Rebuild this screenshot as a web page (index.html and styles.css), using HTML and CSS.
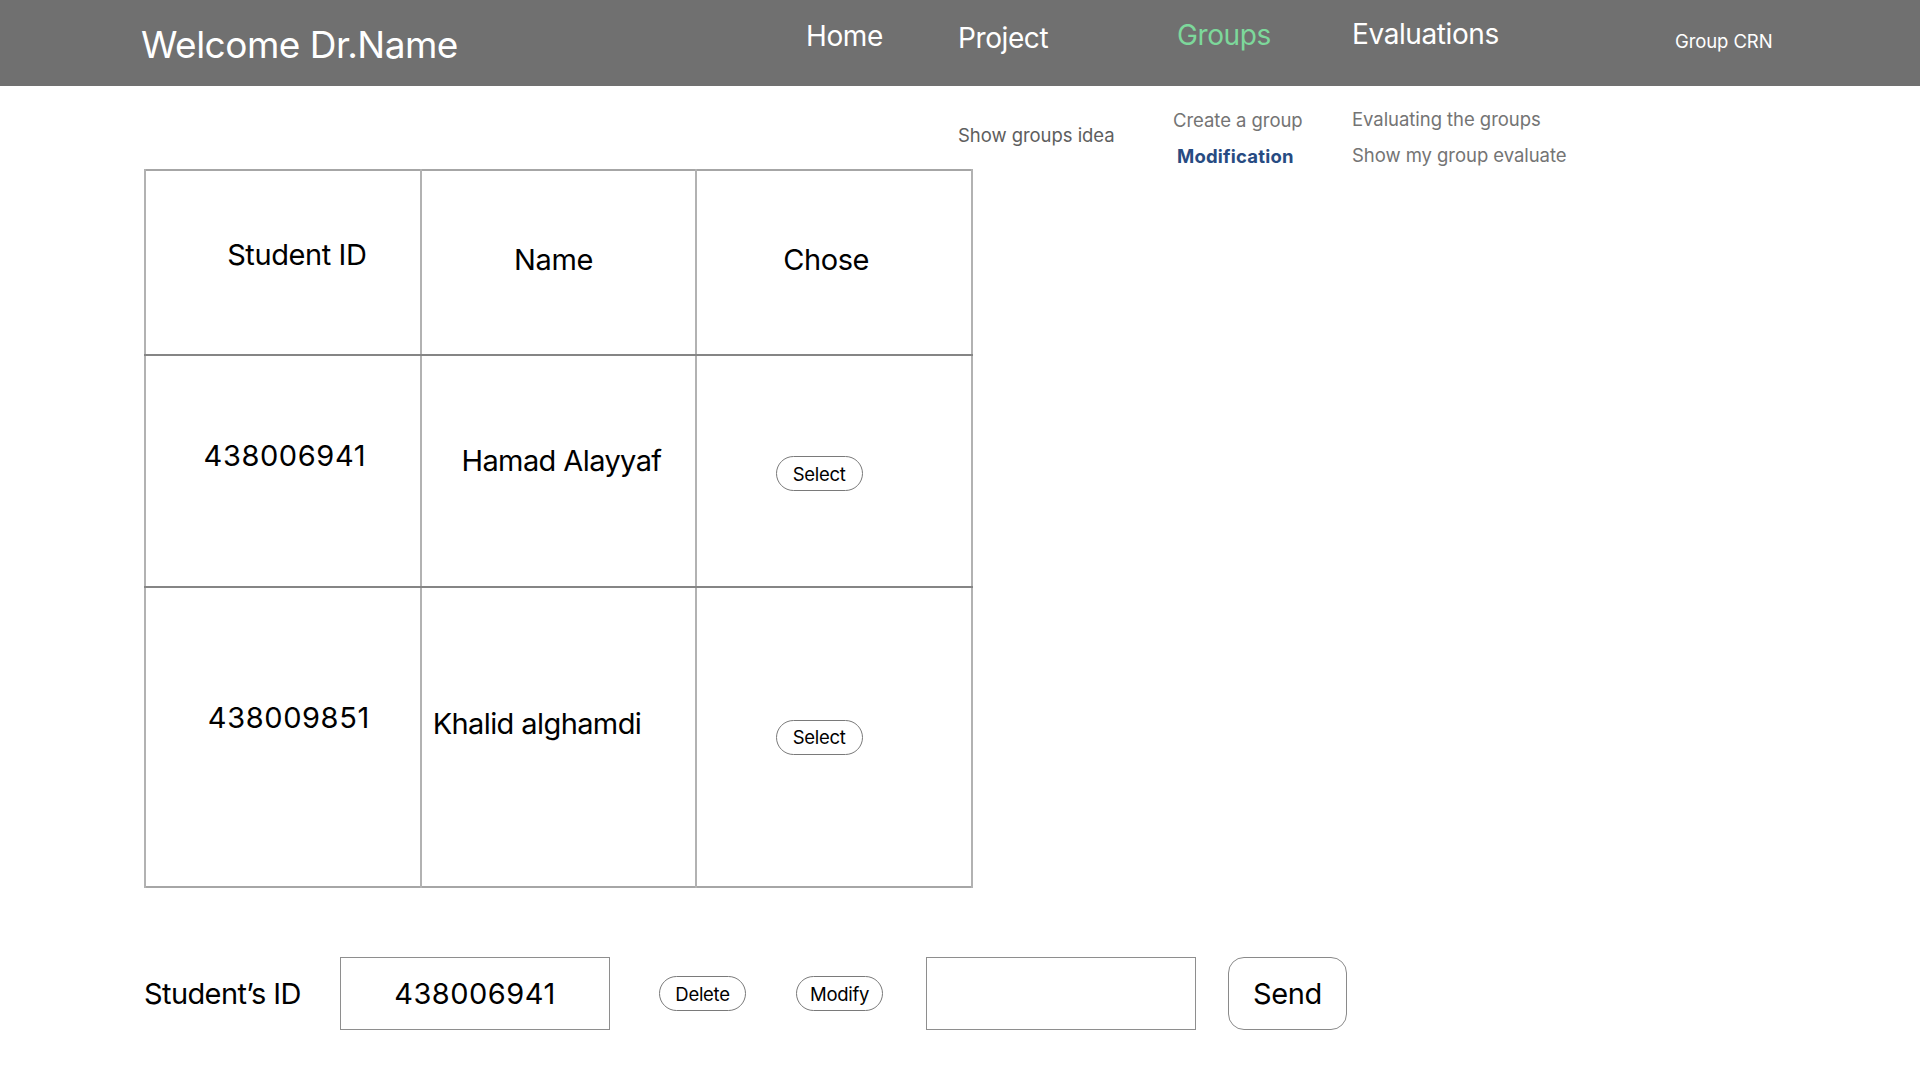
FILE: index.html
```html
<!DOCTYPE html>
<html lang="en">
<head>
<meta charset="utf-8">
<title>Welcome Dr.Name</title>
<link rel="stylesheet" href="styles.css">
</head>
<body>
<header class="topbar cols">
  <div class="brand">Welcome Dr.Name</div>
  <a class="nav nav-home">Home</a>
  <a class="nav nav-project">Project</a>
  <a class="nav nav-groups">Groups</a>
  <a class="nav nav-evals">Evaluations</a>
  <a class="nav-crn">Group CRN</a>
</header>

<nav class="subnav cols">
  <div class="sub-col sub-project">
    <a class="sub-link sub-dark">Show groups idea</a>
  </div>
  <div class="sub-col sub-groups">
    <a class="sub-link sub-create">Create a group</a>
    <a class="sub-link sub-active">Modification</a>
  </div>
  <div class="sub-col sub-evals">
    <a class="sub-link">Evaluating the groups</a>
    <a class="sub-link">Show my group evaluate</a>
  </div>
</nav>

<main class="content">
  <table class="students">
    <colgroup><col class="c"><col class="c"><col class="c"></colgroup>
    <tr class="row-head">
      <th class="h-id">Student ID</th>
      <th class="h-name">Name</th>
      <th class="h-chose">Chose</th>
    </tr>
    <tr class="row-1">
      <td class="num id-1">438006941</td>
      <td class="name-1">Hamad Alayyaf</td>
      <td class="sel sel-1"><button class="pill">Select</button></td>
    </tr>
    <tr class="row-2">
      <td class="num id-2">438009851</td>
      <td class="name-2">Khalid alghamdi</td>
      <td class="sel sel-2"><button class="pill">Select</button></td>
    </tr>
  </table>

  <div class="actions">
    <label class="act-label">Student’s ID</label>
    <div class="box box-id">438006941</div>
    <button class="pill pill-delete">Delete</button>
    <button class="pill pill-modify">Modify</button>
    <div class="box box-empty"></div>
    <button class="send">Send</button>
  </div>
</main>
</body>
</html>
```
FILE: styles.css
```css
* { box-sizing: border-box; }

html, body {
  margin: 0;
  padding: 0;
  background: #ffffff;
  font-family: "Inter", "Liberation Sans", sans-serif;
  color: #000;
}

a { cursor: pointer; }

.cols {
  display: grid;
  grid-template-columns: 141px 665px 152px 219px 175px 323px 1fr;
}

/* ---------- top bar ---------- */
.topbar {
  height: 86px;
  background: #707070;
  align-items: start;
}

.brand {
  grid-column: 2;
  margin-top: 26px;
  font-size: 37px;
  line-height: 1;
  letter-spacing: -0.5px;
  color: #ffffff;
  white-space: nowrap;
}

.nav {
  font-size: 28px;
  line-height: 1;
  letter-spacing: -0.4px;
  color: #ffffff;
  white-space: nowrap;
}
.nav-home { grid-column: 3; margin-top: 22px; }
.nav-project { grid-column: 4; margin-top: 24px; }
.nav-groups { grid-column: 5; margin-top: 21px; color: #7dd89b; }
.nav-evals { grid-column: 6; margin-top: 20px; }

.nav-crn {
  grid-column: 7;
  margin-top: 32px;
  font-size: 18.5px;
  line-height: 1;
  letter-spacing: -0.1px;
  color: #ffffff;
  white-space: nowrap;
}

/* ---------- sub navigation ---------- */
.subnav {
  height: 83px;
  align-items: start;
}

.sub-col {
  display: flex;
  flex-direction: column;
  gap: 17px;
}
.sub-project { grid-column: 4; padding-top: 40px; }
.sub-groups { grid-column: 5; padding-top: 25px; }
.sub-evals { grid-column: 6; padding-top: 24px; }

.sub-link {
  font-size: 18.5px;
  line-height: 1;
  color: #747474;
  letter-spacing: -0.05px;
  white-space: nowrap;
}
.sub-dark { color: #5e5e5e; }
.sub-create { margin-left: -4px; }
.sub-active {
  color: #274b82;
  font-weight: 700;
  letter-spacing: 0.2px;
}

/* ---------- table ---------- */
.content {
  padding-left: 144px;
}

.students {
  width: 829px;
  border-collapse: collapse;
  table-layout: fixed;
  border: 2px solid #a6a6a6;
}

.students th,
.students td {
  border-left: 2px solid #b2b2b2;
  border-right: 2px solid #b2b2b2;
  text-align: center;
  vertical-align: middle;
  padding: 0;
  font-size: 29px;
  line-height: 1;
  font-weight: 400;
  letter-spacing: -0.4px;
}

.row-head { height: 185px; }
.row-1 { height: 232px; }
.row-2 { height: 300px; }

.row-head th { border-bottom: 2px solid #858585; }
.row-1 td { border-bottom: 2px solid #858585; }

.students .num { letter-spacing: 0.6px; }

.students .h-id { padding: 0 0 16px 28px; }
.students .h-name { padding: 0 10px 6px 0; }
.students .h-chose { padding: 0 16px 6px 0; }

.students .id-1 { padding: 0 0 32px 4px; }
.students .name-1 { padding: 0 0 22px 6px; letter-spacing: -0.6px; }
.students .id-2 { padding: 0 0 40px 12px; }
.students .name-2 {
  text-align: left;
  padding: 0 0 27px 11px;
  letter-spacing: -0.6px;
}

.students .sel-1 { padding: 5px 30px 0 0; }
.students .sel-2 { padding: 0 30px 0 0; }

/* ---------- pills ---------- */
.pill {
  width: 87px;
  height: 35px;
  border: 1px solid #7a7a7a;
  border-radius: 18px;
  background: #ffffff;
  font-family: "Inter", "Liberation Sans", sans-serif;
  font-size: 18.5px;
  letter-spacing: -0.3px;
  color: #000;
  padding: 0;
  cursor: pointer;
}

/* ---------- bottom actions ---------- */
.actions {
  display: flex;
  align-items: center;
  margin-top: 69px;
  height: 73px;
}

.act-label {
  font-size: 29px;
  line-height: 1;
  letter-spacing: -0.6px;
  width: 196px;
  white-space: nowrap;
}

.box {
  width: 270px;
  height: 73px;
  border: 1.5px solid #8e8e8e;
  display: flex;
  align-items: center;
  justify-content: center;
  font-size: 29px;
  letter-spacing: 0.5px;
}

.pill-delete { margin-left: 49px; }
.pill-modify { margin-left: 50px; }
.box-empty { margin-left: 43px; }

.send {
  margin-left: 32px;
  width: 119px;
  height: 73px;
  border: 1px solid #8a8a8a;
  border-radius: 16px;
  background: #ffffff;
  font-family: "Inter", "Liberation Sans", sans-serif;
  font-size: 29px;
  letter-spacing: -0.4px;
  color: #000;
  padding: 0;
  cursor: pointer;
}
```
